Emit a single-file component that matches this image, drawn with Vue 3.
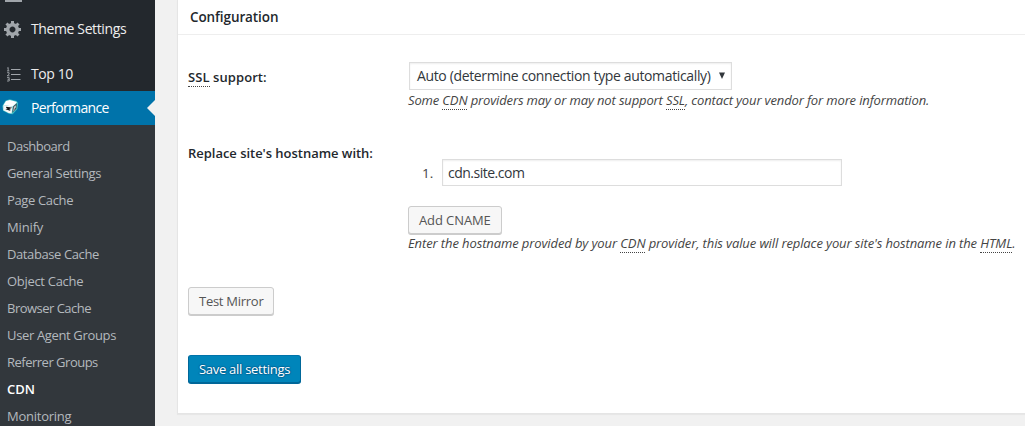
<script setup>
const submenu = [
  { label: 'Dashboard', cls: 'w-dash' },
  { label: 'General Settings', cls: 'w-gen' },
  { label: 'Page Cache', cls: 'w-page' },
  { label: 'Minify', cls: 'w-min' },
  { label: 'Database Cache', cls: 'w-db' },
  { label: 'Object Cache', cls: 'w-obj' },
  { label: 'Browser Cache', cls: 'w-br' },
  { label: 'User Agent Groups', cls: 'w-ua' },
  { label: 'Referrer Groups', cls: 'w-ref' },
  { label: 'CDN', cls: 'w-cdn', current: true },
  { label: 'Monitoring', cls: 'w-mon' },
]
</script>

<template>
  <div class="admin">
    <nav class="sidebar">
      <div class="cut"><span></span></div>
      <a class="item">
        <svg class="icon gear" viewBox="0 0 20 20" width="20" height="20">
          <path fill="#a0a5aa" fill-rule="evenodd" d="M18 12h-2.18c-.17.7-.44 1.35-.81 1.93l1.54 1.54-2.1 2.1-1.54-1.54c-.58.36-1.23.63-1.91.79V19H8v-2.18c-.68-.16-1.33-.43-1.91-.79l-1.54 1.54-2.12-2.12 1.54-1.54c-.36-.58-.63-1.23-.79-1.91H1V9.03h2.17c.16-.7.44-1.35.8-1.94L2.43 5.55l2.1-2.1 1.54 1.54c.58-.37 1.24-.64 1.93-.81V2h3v2.18c.68.16 1.33.43 1.91.79l1.54-1.54 2.12 2.12-1.54 1.54c.36.59.64 1.24.8 1.94H18V12zm-8.5 1.5c1.66 0 3-1.34 3-3s-1.34-3-3-3-3 1.34-3 3 1.34 3 3 3z" />
        </svg>
        <span class="w-theme">Theme Settings</span>
      </a>
      <div class="gap"></div>
      <a class="item">
        <svg class="icon" viewBox="0 0 20 20" width="20" height="20" fill="none" stroke="#a0a5aa">
          <path d="M8 5.500h9.500M8 10.500h9.500M8 15.500h9.500" />
          <path stroke-width=".9" d="M4.200 4.200l1-.7v3.400M4 6.900h2.400M4.100 8.700h2v1.500l-1.900 1.600h2.300M4 13.600h2.200v3.400H4M4.600 15.300h1.600" />
        </svg>
        <span class="w-top">Top 10</span>
      </a>
      <a class="item active">
        <svg class="icon" viewBox="0 0 20 20" width="20" height="20">
          <path fill="#3dbcc4" d="M1.300 8L4.400 2.700 8.600 1.200l7 1.700 1.500 2.100-.7 6.100-4.700 5.200-3.900-.6-5.700-3z" />
          <path fill="#fff" d="M5 3.100l3.800-1.200 6.500 1.800.5.900-4 4L2.500 7z" />
          <path fill="#f6f6f6" d="M2.300 6.900l9.300 1.500-1 7.100-3-.5-5.300-2.700z" />
          <path fill="#444c50" d="M12.300 8.300l3.600-3-.7 5.500-3.900 4z" />
          <path fill="#c9cdd0" d="M13 8.800l2-1.500-.2 2.200-1.200 1.300-.3 1.500-1.100 1.100z" />
          <path fill="none" stroke="#111" stroke-width="1.200" d="M5.200 9.300l3.900.6-2.900 1.200 3.100 1" />
        </svg>
        <span class="w-perf">Performance</span>
      </a>
      <ul class="submenu">
        <li v-for="s in submenu" :key="s.label" :class="{ current: s.current }">
          <span :class="s.cls">{{ s.label }}</span>
        </li>
      </ul>
    </nav>

    <main class="panel">
      <h3><span class="w-conf">Configuration</span></h3>
      <div class="body">
        <div class="row ssl">
          <label><span class="w-ssl"><abbr>SSL</abbr> support:</span></label>
          <div class="field">
            <div class="select">
              <span class="w-auto">Auto (determine connection type automatically)</span>
              <svg width="6" height="7" viewBox="0 0 6 7"><path fill="#32373c" d="M0 .5h6L3 7z" /></svg>
            </div>
            <p class="w-d1">Some <abbr>CDN</abbr> providers may or may not support <abbr>SSL</abbr>, contact your vendor for more information.</p>
          </div>
        </div>
        <div class="row host">
          <label><span class="w-rep">Replace site's hostname with:</span></label>
          <div class="field">
            <div class="cname">
              <span class="num">1.</span>
              <div class="input"><span class="w-site">cdn.site.com</span></div>
            </div>
            <button class="btn add"><span class="w-add">Add CNAME</span></button>
            <p class="w-d2">Enter the hostname provided by your <abbr>CDN</abbr> provider, this value will replace your site's hostname in the <abbr>HTML</abbr>.</p>
          </div>
        </div>
        <button class="btn test"><span class="w-test">Test Mirror</span></button>
        <button class="btn primary"><span class="w-save">Save all settings</span></button>
      </div>
    </main>
  </div>
</template>

<style>
body { background: #f1f1f1; overflow: hidden; }
</style>

<style scoped>
* { box-sizing: border-box; }
.admin {
  display: flex;
  width: 1025px;
  height: 426px;
  overflow: hidden;
  font-family: "Open Sans", "Noto Sans", sans-serif;
  font-size: 13px;
  color: #444;
  background: #f1f1f1;
  white-space: nowrap;
}
.sidebar { width: 155px; flex: none; background: #23282d; overflow: hidden; }
.cut { height: 12px; padding-left: 5px; }
.cut span { display: block; width: 17px; height: 2px; background: #a0a5aa; }
.gap { height: 11px; }
.item {
  display: flex;
  align-items: center;
  height: 34px;
  padding-left: 3px;
  font-size: 14px;
  color: #eee;
}
.item > span { padding-bottom: 2px; }
.icon { width: 20px; flex: none; margin-right: 8px; }
.item.active { background: #0073aa; color: #fff; }
.item.active .icon { margin-left: -2px; margin-right: 10px; }
.item.active::after {
  content: "";
  margin-left: auto;
  border: 8px solid transparent;
  border-left: 0;
  border-right-color: #f1f1f1;
}
.submenu {
  list-style: none;
  margin: 0;
  padding: 8px 0 0 7px;
  height: 310px;
  background: #32373c;
  color: #b4b9be;
}
.submenu li { height: 27px; line-height: 27px; }
.submenu .current { color: #fff; font-weight: 600; }
.panel {
  flex: 1;
  height: 414px;
  margin-left: 22px;
  background: #fff;
  border-left: 1px solid #e5e5e5;
  border-bottom: 1px solid #e5e5e5;
  box-shadow: 0 1px 1px rgba(0, 0, 0, .04);
}
h3 {
  margin: 0;
  height: 35px;
  padding-left: 12px;
  border-bottom: 1px solid #eee;
  font-size: 13.5px;
  line-height: 34px;
  font-weight: 600;
  color: #23282d;
}
.body { padding-left: 10px; display: flex; flex-direction: column; align-items: flex-start; }
.row { display: flex; }
.row label { width: 220px; flex: none; font-size: 13px; font-weight: 600; color: #23282d; line-height: 20px; }
.ssl { height: 84px; padding-top: 27px; }
.ssl label { padding-top: 5px; }
.host { height: 168px; padding-top: 24px; }
abbr { border-bottom: 1px dotted #444; display: inline-block; line-height: 17px; }
p { margin: 0; font-style: italic; font-size: 13px; line-height: 18px; color: #444; }
.select {
  display: flex;
  align-items: center;
  justify-content: space-between;
  width: 323px;
  height: 28px;
  margin: 0 0 1px 1px;
  padding: 0 6px 1px 7px;
  border: 1px solid #ddd;
  box-shadow: inset 0 1px 2px rgba(0, 0, 0, .07);
  font-size: 14px;
  color: #32373c;
}
.select svg { flex: none; }
.cname { display: flex; align-items: center; height: 27px; margin: 16px 0 20px; }
.num { width: 34px; padding-left: 14px; font-size: 13.5px; }
.input {
  width: 400px;
  height: 27px;
  padding-left: 5px;
  border: 1px solid #ddd;
  box-shadow: inset 0 1px 2px rgba(0, 0, 0, .07);
  font-size: 14px;
  line-height: 26px;
  color: #32373c;
}
.btn {
  display: block;
  height: 28px;
  margin: 0;
  padding: 0 0 0 10px;
  text-align: left;
  font: 13px/26px "Open Sans", "Noto Sans", sans-serif;
  color: #555;
  background: #f7f7f7;
  border: 1px solid #ccc;
  border-radius: 3px;
  box-shadow: 0 1px 0 #ccc;
}
.add { width: 94px; }
.test { width: 86px; }
.primary {
  width: 113px;
  margin-top: 40px;
  color: #fff;
  background: #0085ba;
  border-color: #0073aa #006799 #006799;
  box-shadow: 0 1px 0 #006799;
  text-shadow: 0 -1px 1px #006799, 1px 0 1px #006799, 0 1px 1px #006799, -1px 0 1px #006799;
}
.w-theme { letter-spacing: -.38px; }
.w-top { letter-spacing: -.4px; }
.w-perf { letter-spacing: -.63px; }
.w-dash { letter-spacing: -.5px; }
.w-gen { letter-spacing: -.33px; }
.w-page { letter-spacing: -.35px; }
.w-min { letter-spacing: -.15px; }
.w-db { letter-spacing: -.4px; }
.w-obj { letter-spacing: -.3px; }
.w-br { letter-spacing: -.52px; }
.w-ua { letter-spacing: -.35px; }
.w-ref { letter-spacing: -.5px; }
.w-mon { letter-spacing: -.25px; }
.w-conf { letter-spacing: -.1px; }
.w-ssl { letter-spacing: .08px; }
.w-auto { letter-spacing: -.36px; }
.w-d1 { letter-spacing: -.14px; }
.w-d2 { letter-spacing: -.107px; }
.w-rep { letter-spacing: -.03px; }
.w-site { letter-spacing: -.5px; }
.w-add { letter-spacing: -.1px; }
.w-test { letter-spacing: -.27px; }
.w-save { letter-spacing: -.28px; }
</style>
